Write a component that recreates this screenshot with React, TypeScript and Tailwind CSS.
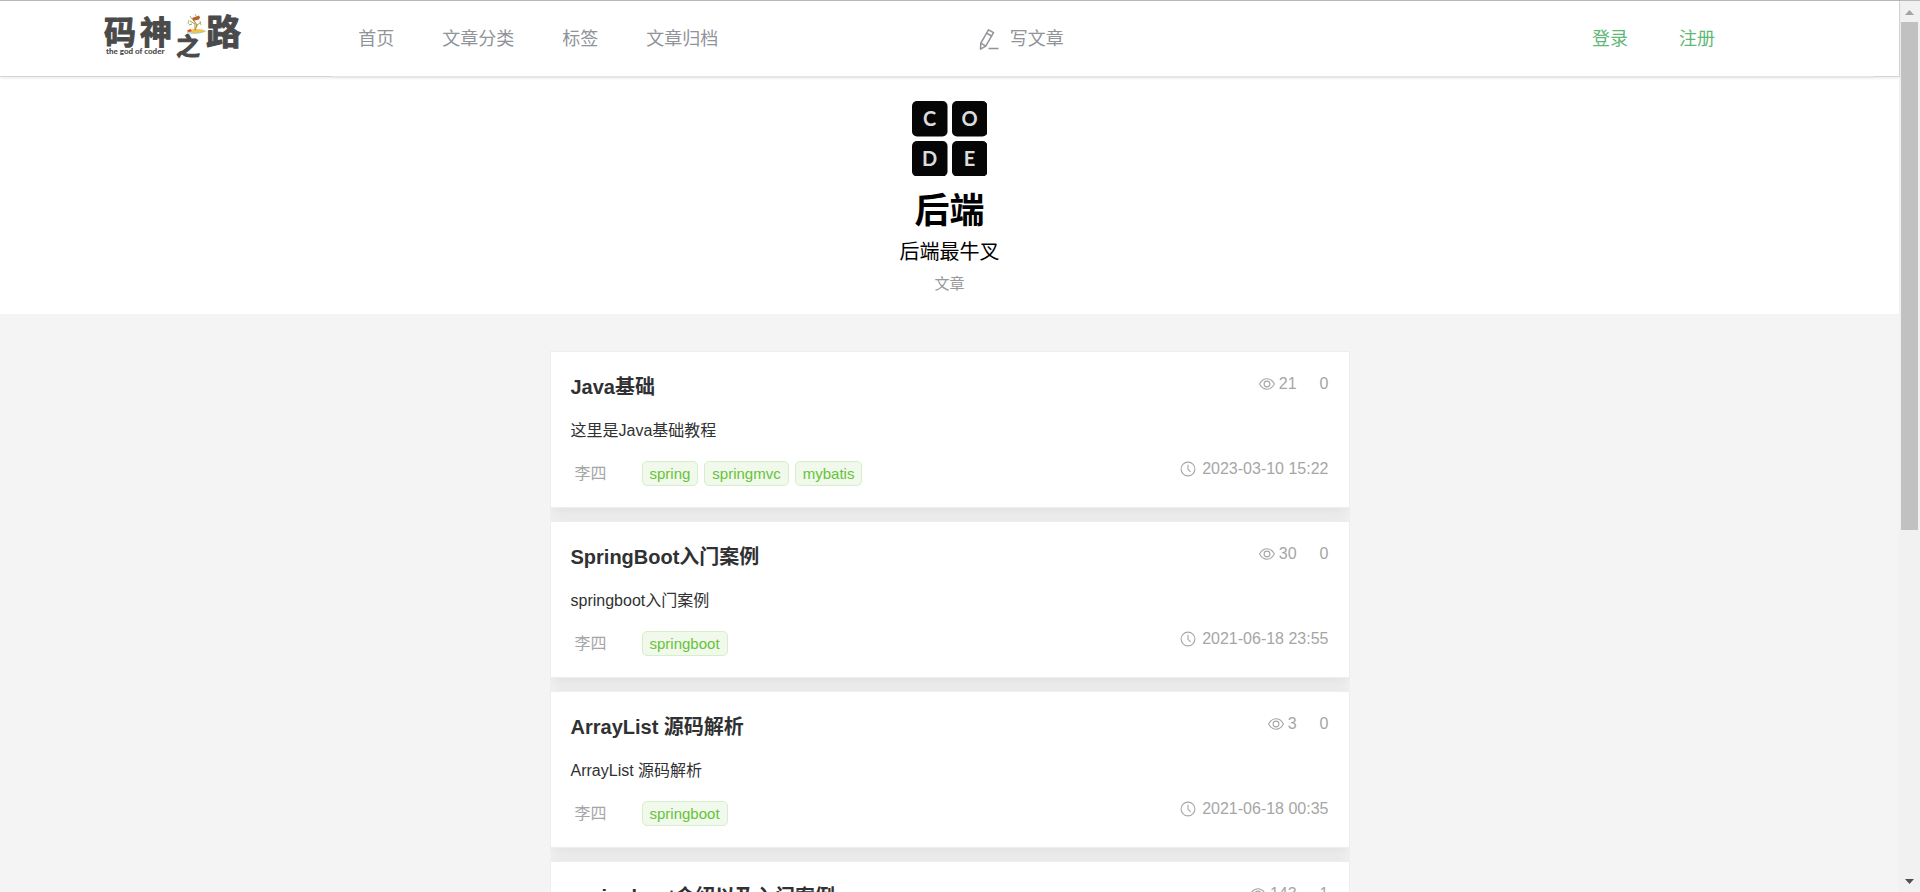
import React from "react";

type Article = {
  id: number;
  title: string;
  summary: string;
  author: string;
  tags: string[];
  views: number;
  comments: number;
  date: string;
};

const articles: Article[] = [
  { id: 1, title: "Java基础", summary: "这里是Java基础教程", author: "李四", tags: ["spring", "springmvc", "mybatis"], views: 21, comments: 0, date: "2023-03-10 15:22" },
  { id: 2, title: "SpringBoot入门案例", summary: "springboot入门案例", author: "李四", tags: ["springboot"], views: 30, comments: 0, date: "2021-06-18 23:55" },
  { id: 3, title: "ArrayList 源码解析", summary: "ArrayList 源码解析", author: "李四", tags: ["springboot"], views: 3, comments: 0, date: "2021-06-18 00:35" },
  { id: 4, title: "springboot介绍以及入门案例", summary: "springboot介绍以及入门案例", author: "李四", tags: ["springboot"], views: 143, comments: 1, date: "2021-06-17 23:20" },
];

function Logo() {
  return (
    <svg width="142" height="54" viewBox="0 -6 142 54" role="img" aria-label="码神之路" className="block overflow-visible">
      <g fill="#4a4a4a" stroke="#4a4a4a" strokeWidth="1" strokeLinejoin="round" fontFamily='"Noto Sans CJK SC", sans-serif' fontWeight="700">
        <text x="1" y="32" fontSize="32">码</text>
        <text x="37" y="32" fontSize="32">神</text>
        <text x="73" y="43" fontSize="24">之</text>
        <text x="103" y="33" fontSize="35">路</text>
      </g>
      <text x="3" y="42" fontSize="8" fontFamily="Lato, sans-serif" fontWeight="900" fill="#4a4a4a">
        the god of coder
      </text>
      <ellipse cx="93" cy="19" rx="9" ry="2" fill="#f3c247" />
      <path d="M84 20.500q9 2.600 19-1.500" fill="none" stroke="#8fd0dc" strokeWidth="0.900" />
      <path d="M84 19l3-2 2 2-3 1z" fill="#d9482b" />
      <path d="M92 18v-6l-5-3M93 14l5-4M89 12l-3 1" fill="none" stroke="#8a9a3c" strokeWidth="0.900" />
      <path d="M89 6l7-2.500 1 2-1 2-6 1.500z" fill="#b9622c" />
      <path d="M87 4l2 3M92 2l1 2M86 8l-1 4M97 9l1 4" stroke="#a8b04a" strokeWidth="0.900" />
      <path d="M91 9l3 4-2 5" fill="none" stroke="#c98a3a" strokeWidth="1.200" />
    </svg>
  );
}

function EditIcon() {
  return (
    <svg width="22" height="22" viewBox="0 0 22 22" fill="none" stroke="currentColor" strokeWidth="1.5" strokeLinejoin="round" aria-hidden="true">
      <path d="M10.5 1.800l5 2.900-7.700 13.400-5.300 3 .3-6z" />
      <path d="M8.600 5.100l5 2.900M2.800 15.100l5 3" />
      <path d="M10.500 20.500h10" />
    </svg>
  );
}

function EyeIcon() {
  return (
    <svg width="16" height="16" viewBox="0 0 16 16" fill="none" stroke="currentColor" strokeWidth="1.1" aria-hidden="true">
      <path d="M.6 8C2.400 4.600 5 2.800 8 2.800s5.600 1.800 7.400 5.200C13.600 11.400 11 13.200 8 13.200S2.400 11.400.6 8z" />
      <circle cx="8" cy="8" r="2.900" />
    </svg>
  );
}

function ClockIcon() {
  return (
    <svg width="16" height="16" viewBox="0 0 16 16" fill="none" stroke="currentColor" strokeWidth="1.1" strokeLinecap="round" aria-hidden="true">
      <circle cx="8" cy="8" r="6.900" />
      <path d="M8 4v4.300l2.300 2.300" />
    </svg>
  );
}

function CategoryImage() {
  const tiles = [
    { letter: "C", x: 0, y: 0 },
    { letter: "O", x: 40, y: 0 },
    { letter: "D", x: 0, y: 40 },
    { letter: "E", x: 40, y: 40 },
  ];
  return (
    <svg width="75" height="75" viewBox="0 0 75 75" role="img" aria-label="CODE">
      {tiles.map((t) => (
        <g key={t.letter}>
          <rect x={t.x} y={t.y} width="35.500" height="35.500" rx="5" fill="#050505" />
          <text x={t.x + 17.5} y={t.y + 25} textAnchor="middle" fontSize="20" fontWeight="700" fontFamily="Lato, sans-serif" fill="#dcdcdc">
            {t.letter}
          </text>
        </g>
      ))}
    </svg>
  );
}

function Header() {
  const links = ["首页", "文章分类", "标签", "文章归档"];
  return (
    <header className="relative flex h-[76px] shrink-0 border-t border-[#b8b8b8] bg-white shadow-[0_2px_3px_rgba(18,18,18,0.1),0_0_0_1px_rgba(18,18,18,0.1)]">
      <a href="#home" className="w-[17.5%] pt-[5px] pl-[103px]">
        <Logo />
      </a>
      <div className="-mb-[2px] flex flex-1 items-center border-b-2 border-[#e6e6e6] bg-white text-lg text-[#909399]">
        <nav className="flex w-[42%] gap-12 pl-[26px]">
          {links.map((label) => (
            <a key={label} href={`#${label}`} className="whitespace-nowrap">
              {label}
            </a>
          ))}
        </nav>
        <a href="#write" className="-ml-[2px] flex items-center gap-[10px] whitespace-nowrap">
          <EditIcon />
          写文章
        </a>
        <div className="ml-auto flex gap-[51px] pr-[159px] text-[#5fb878]">
          <a href="#login">登录</a>
          <a href="#register">注册</a>
        </div>
      </div>
      <div className="w-[25px]" />
    </header>
  );
}

function ArticleCard({ article }: { article: Article }) {
  return (
    <article className="flex h-[157px] shrink-0 justify-between border border-[#ebeef5] bg-white px-5 shadow-[0_3px_15px_rgba(0,0,0,0.1)]">
      <div className="pt-[19px]">
        <h2 className="text-xl leading-8 font-bold text-[#303133]">
          <a href={`#article-${article.id}`}>{article.title}</a>
        </h2>
        <p className="mt-4 text-base leading-6 text-[#303133]">{article.summary}</p>
        <div className="mt-[18px] flex items-center">
          <span className="w-[71px] pl-1 text-base leading-6 text-[#a6a6a6]">{article.author}</span>
          <ul className="flex gap-1.5">
            {article.tags.map((tag) => (
              <li key={tag} className="rounded-[5px] border border-[#d5efc8] bg-[#f0f9eb] px-[7px] text-[15px] leading-[23px] text-[#67c23a]">
                {tag}
              </li>
            ))}
          </ul>
        </div>
      </div>
      <div className="flex flex-col items-end pt-5 text-base leading-6 text-[#a6a6a6]">
        <div className="flex gap-[23px]">
          <span className="flex items-center gap-1">
            <EyeIcon />
            {article.views}
          </span>
          <span>{article.comments}</span>
        </div>
        <time className="mt-[61px] flex items-center gap-1.5">
          <ClockIcon />
          {article.date}
        </time>
      </div>
    </article>
  );
}

function Scrollbar() {
  return (
    <div className="flex w-[21px] shrink-0 flex-col items-center border-t border-[#b8b8b8] bg-[#f1f1f1]" aria-hidden="true">
      <svg width="21" height="21" viewBox="0 0 21 21">
        <path d="M6 14h9l-4.500-5z" fill="#a3a3a3" />
      </svg>
      <div className="h-[57%] w-[17px] bg-[#c1c1c1]" />
      <svg width="21" height="21" viewBox="0 0 21 21" className="mt-auto">
        <path d="M6 8h9l-4.500 5z" fill="#505050" />
      </svg>
    </div>
  );
}

export default function App() {
  return (
    <div className="flex h-screen overflow-hidden bg-[#f4f4f4] font-['Liberation_Sans','Noto_Sans_CJK_SC',sans-serif]">
      <div className="flex min-w-0 flex-1 flex-col">
        <Header />
        <main className="flex min-h-0 flex-1 flex-col overflow-hidden">
          <section className="flex shrink-0 flex-col items-center bg-white pt-[25px] pb-[18px]">
            <CategoryImage />
            <h1 className="mt-[14px] text-[35px] leading-[42px] font-bold text-black">后端</h1>
            <p className="mt-[6px] text-xl leading-7 text-black">后端最牛叉</p>
            <span className="mt-[6px] text-[15px] leading-6 text-[#999999]">文章</span>
          </section>
          <section className="mx-auto mt-[37px] flex w-full max-w-[800px] flex-col gap-[13px] overflow-hidden">
            {articles.map((a) => (
              <ArticleCard key={a.id} article={a} />
            ))}
          </section>
        </main>
      </div>
      <Scrollbar />
    </div>
  );
}
